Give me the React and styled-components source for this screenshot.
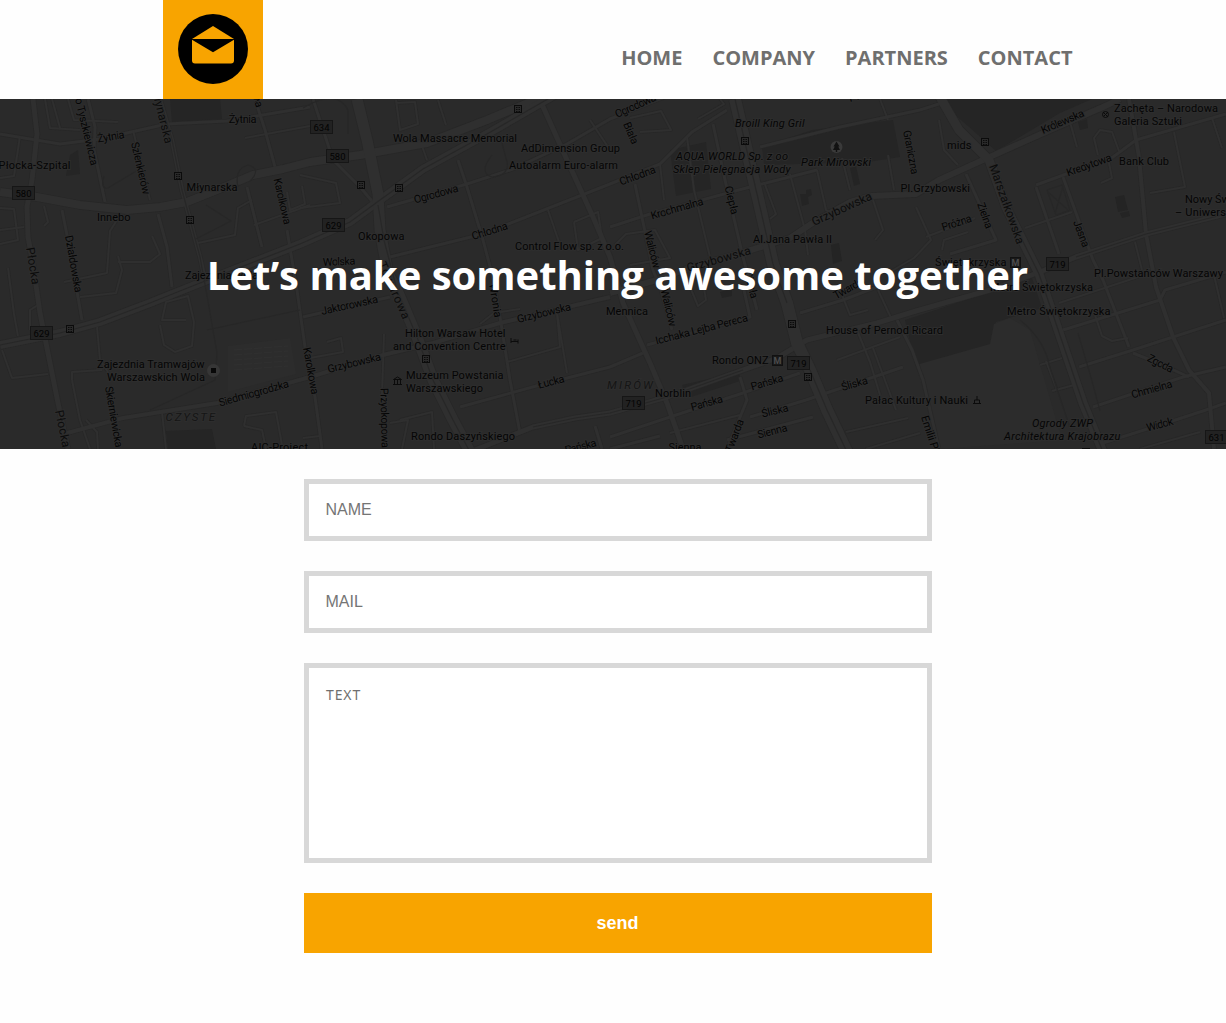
import React from "react";
import styled, { createGlobalStyle } from "styled-components";

const GlobalStyle = createGlobalStyle`
  *, *::before, *::after { box-sizing: border-box; }
  body {
    margin: 0;
    background: #fefefe;
    font-family: "Open Sans", sans-serif;
  }
`;

const Page = styled.div`
  min-height: 1023px;
  overflow: hidden;
`;

const Header = styled.header`
  display: flex;
  justify-content: space-between;
  align-items: flex-start;
  width: 909.5px;
  height: 99px;
  margin-left: 163px;
`;

const LogoLink = styled.a`
  display: flex;
  justify-content: center;
  width: 100px;
  height: 99px;
  padding-top: 14px;
  background: #f8a400;
`;

const Nav = styled.nav`
  display: flex;
  gap: 30px;
  padding-top: 44px;
`;

const NavLink = styled.a`
  color: #6f6f6e;
  font-size: 20px;
  font-weight: 700;
  line-height: 28px;
  text-decoration: none;
  white-space: nowrap;
`;

const Hero = styled.section`
  position: relative;
  display: flex;
  justify-content: center;
  align-items: center;
  height: 350px;
  padding: 2px 0 0 9px;
  overflow: hidden;
  background: #2a2a2a;
`;

const MapSvg = styled.svg`
  position: absolute;
  inset: 0;
  width: 1226px;
  height: 350px;
  font-family: Roboto, sans-serif;
`;

const HeroTitle = styled.h1`
  position: relative;
  margin: 0;
  color: #fff;
  font-size: 40px;
  font-weight: 700;
  line-height: 54px;
  white-space: nowrap;
`;

const Form = styled.form`
  display: flex;
  flex-direction: column;
  gap: 30px;
  width: 628px;
  margin: 30px 0 0 304px;
`;

const Field = styled.input`
  height: 62px;
  padding: 0 16.5px;
  border: 5px solid #d8d8d8;
  border-radius: 0;
  outline: 0;
  background: #fff;
  font: 16px "Liberation Sans", Arial, sans-serif;
  &::placeholder { color: #757575; opacity: 1; }
`;

const Message = styled.textarea`
  height: 200px;
  padding: 16px 17px;
  border: 5px solid #d8d8d8;
  border-radius: 0;
  outline: 0;
  resize: none;
  background: #fff;
  font: 14px/22px "Noto Sans", sans-serif;
  letter-spacing: 0.9px;
  &::placeholder { color: #6f6f6f; opacity: 1; }
`;

const SendButton = styled.button`
  height: 60px;
  padding: 0 1px 0 0;
  border: 0;
  background: #f8a400;
  color: #fff;
  font: bold 18px "Liberation Sans", Arial, sans-serif;
`;

const PARKS = [
  "170,99 220,99 222,119 172,122",
  "762,147 812,130 893,120 900,157 868,162 764,165",
  "670,150 706,142 711,189 676,196",
  "936,99 1092,99 1060,113 996,151 968,126",
  "905,320 990,292 1032,278 1042,308 996,322 990,346 916,367",
  "682,385 740,372 740,381 688,398",
  "70,155 78,150 80,174 66,176",
  "166,431 212,429 216,449 168,449",
];

const BUILDINGS = [
  "800,194 806,194 806,190 811,189 812,195 808,197 809,204 802,206",
  "1115,197 1124,195 1128,210 1118,212",
  "1120,213 1129,211 1130,216 1122,218",
  "831,245 839,243 842,261 833,264",
  "1078,122 1087,119 1088,128 1080,130",
  "850,168 856,166 860,184 854,186",
  "720,292 732,289 732,296 722,298",
];

/* [width, points] */
const ROADS = [
  [3, "0,134 60,144 100,139 167,124 227,121 310,107"],
  [3, "88,99 95,127 94,150 105,202"],
  [3, "62,210 68,240 82,320"],
  [2, "117,220 110,231 107,273 64,282"],
  [3, "158,214 167,247 172,287"],
  [2, "44,206 48,222 44,226"],
  [2, "0,208 14,209 18,240 0,244"],
  [2, "0,230 24,227"],
  [2, "8,268 14,314 18,336"],
  [2, "20,136 14,176 0,178"],
  [2, "45,99 50,128 80,130"],
  [2, "52,99 60,128"],
  [2, "68,99 74,120 118,122"],
  [2, "133,130 150,200"],
  [3, "247,187 262,247"],
  [2, "254,225 310,205"],
  [2, "198,243 235,235 238,208 252,200"],
  [2, "245,138 310,126"],
  [2, "287,192 290,210 305,204 302,186"],
  [2, "152,236 160,254 150,262 118,262"],
  [2, "97,327 100,360 108,372"],
  [2, "72,380 72,372 102,370"],
  [2, "72,380 80,420 90,449"],
  [2, "86,420 97,432 98,449"],
  [2, "160,325 164,345 175,352 192,346 194,322 188,296 166,302 162,320 186,320"],
  [2, "244,426 246,416 276,412 282,445"],
  [2, "244,426 262,430 266,449"],
  [2, "80,297 116,293 122,270 118,256"],
  [2, "30,330 30,310 38,305"],
  [2, "2,350 12,378 48,374"],
  [2, "162,412 166,449"],
  [2, "396,100 400,130 418,124 415,102 396,103"],
  [2, "438,100 446,125"],
  [2, "422,146 427,160"],
  [2, "300,208 340,203 336,183 300,175"],
  [3, "255,99 265,130 275,167"],
  [3, "287,230 297,290 305,347 315,397 322,449"],
  [3, "458,160 467,187 483,240 492,274 500,317 510,380 520,433"],
  [3, "387,207 467,184 513,169 567,144 610,119 690,87"],
  [3, "390,257 483,234 610,184 660,164 692,132 727,110"],
  [3, "303,317 390,297"],
  [2, "548,210 560,245"],
  [2, "574,222 578,250 602,238 598,212 574,222"],
  [2, "590,120 610,150"],
  [2, "640,132 671,130 661,111 630,118"],
  [2, "698,119 724,104 720,99"],
  [2, "880,99 888,120"],
  [3, "760,147 840,127 920,110 942,103"],
  [3, "610,227 650,214 750,187 817,170"],
  [3, "635,184 653,270 661,290 672,330"],
  [2, "660,164 664,200"],
  [2, "687,137 694,190 710,257"],
  [3, "713,124 725,180 743,257 757,310"],
  [2, "764,182 776,214 770,219"],
  [2, "790,174 805,230 808,255"],
  [2, "817,170 826,210 835,215"],
  [2, "842,158 850,190"],
  [2, "888,155 894,190"],
  [2, "615,245 626,234 655,230 670,258 630,265"],
  [2, "688,282 698,306 706,300 702,276"],
  [2, "873,200 883,230 875,240"],
  [2, "916,207 931,240 914,258 890,272"],
  [2, "926,237 975,218"],
  [2, "942,250 944,240 968,232"],
  [3, "966,174 996,240 950,254"],
  [3, "1036,185 1113,157 1136,140 1226,114"],
  [3, "1036,187 1059,254"],
  [3, "1063,177 1093,260 1103,280 1129,347"],
  [2, "1025,228 1072,212"],
  [2, "1098,155 1094,138 1100,130 1112,132 1119,151"],
  [2, "1108,158 1112,178 1101,183"],
  [2, "1150,193 1185,187 1174,132"],
  [2, "1070,122 1077,147"],
  [2, "939,120 944,150 958,165"],
  [2, "1212,118 1222,148"],
  [2, "1135,242 1142,270"],
  [3, "1079,367 1133,350 1173,337 1226,320"],
  [3, "1063,330 1160,300 1165,290 1226,272"],
  [3, "1133,353 1160,364 1189,377"],
  [3, "1093,407 1183,377 1226,367"],
  [3, "1103,443 1160,425 1206,410 1226,403"],
  [2, "1059,303 1138,277"],
  [2, "1095,315 1102,336 1112,341 1128,338"],
  [2, "1214,275 1224,318"],
  [2, "1040,365 1062,358"],
  [2, "1052,391 1074,385"],
  [2, "1046,361 1057,390"],
  [2, "1140,449 1200,432"],
  [3, "750,417 806,400 903,367"],
  [3, "610,437 670,417 743,393 800,373"],
  [2, "670,433 740,415"],
  [3, "727,440 813,417"],
  [2, "837,360 900,337"],
  [2, "857,330 870,362 880,395"],
  [2, "873,348 896,410"],
  [3, "897,320 912,350 923,380 939,449"],
  [3, "647,345 750,317 744,290"],
  [3, "800,313 843,300 877,287"],
  [2, "838,285 850,315 868,310"],
  [2, "878,290 892,320"],
  [3, "727,449 747,400 740,377"],
  [3, "460,407 540,385 610,367 643,353"],
  [2, "507,362 560,347 557,313 567,373"],
  [2, "480,324 494,313 520,309"],
  [2, "384,334 382,395"],
  [2, "327,342 341,338 343,352 310,358"],
  [2, "400,420 432,412 434,449"],
  [2, "390,423 408,420 402,449"],
  [2, "303,438 320,436"],
  [3, "595,426 602,449"],
  [2, "846,432 908,418"],
  [2, "866,449 920,433"],
  [3, "313,99 333,160 360,187 377,207"],
  [3, "610,449 660,436"],
  [5, "33,99 37,134 32,180 27,207 28,237 33,264 40,313 48,353 58,403 68,449"],
  [4, "160,99 172,140 182,190 200,257 205,280"],
  [4, "67,433 123,418 217,403 310,377 383,355 433,343 500,323 610,297"],
  [5, "540,100 567,160 593,217 610,257 623,303 650,363 667,403 683,449"],
  [6, "610,293 657,280 689,268 751,250 790,238 814,222 850,202 872,196 916,194 939,180 983,160 1050,130 1103,107 1120,99"],
  [4, "1129,99 1139,157 1146,234 1156,287 1173,337 1189,370 1209,393 1214,449"],
  [5, "470,452 533,427 575,418 610,413 667,397 743,370 777,358 807,340 877,323 916,311 990,290 1040,272 1076,257 1146,234 1226,214"],
  [8, "0,192 37,197 80,205 127,210 160,207 187,202 217,190 253,175 283,169 310,162 360,155 427,143 487,120 540,98"],
  [8, "0,345 60,333 100,322 150,303 200,283 300,244 350,222 380,200 423,169 487,134 560,92"],
  [11, "357,99 367,140 378,194 380,230 388,274 397,290 417,337 433,380 453,420 470,452"],
  [12, "735,99 750,164 760,207 773,264 787,303 797,343 810,370 827,410 847,452"],
  [9, "936,90 959,130 989,160 1006,207 1039,274 1049,303 1066,353 1083,403 1103,452"],
];

const MEDIANS = [
  "0,345 60,333 100,322 150,303 200,283 300,244 350,222 380,200 423,169 487,134 560,92",
  "378,205 384,240 397,290 417,337 433,380 453,420 470,452",
  "735,99 750,164 760,207 773,264 787,303",
  "810,370 827,410 847,452",
  "1006,207 1039,274 1049,303 1066,353 1083,403 1103,452",
  "160,99 172,140 182,190 200,257 206,290 217,353 215,380 150,410",
  "533,427 575,418 610,413 667,397 743,370",
  "1076,257 1146,234 1226,214",
  "207,330 300,310",
];

/* [text, baseline start x, y, baseline end x, y, variant] */
const LABELS = [
  ["o Tyszkiewicza", 75, 99, 91, 166],
  ["Żytnia", 98, 142.5, 125, 138],
  ["Żytnia", 228.7, 122.5, 256.5, 122.5],
  ["Szlenkierów", 131, 143, 143, 195],
  ["łynarska", 154, 99, 165, 144, "road"],
  ["wa", 253, 97, 256, 108],
  ["Płocka-Szpital", -1.5, 168.7, 70.5, 168.7],
  ["Innebo", 97, 220.7, 130.5, 220.7],
  ["Młynarska", 186.5, 190.7, 237.5, 190.7],
  ["Karolkowa", 273.5, 179, 284, 225],
  ["Płocka", 26, 248, 32, 285, "road"],
  ["Działdowska", 65, 236, 75, 293],
  ["Zajezdnia Wola", 185, 278.7, 258, 278.7],
  ["Wola Massacre Memorial", 393, 141.7, 517, 141.7],
  ["AdDimension Group", 521, 151.7, 620, 151.7],
  ["Autoalarm Euro-alarm", 509, 168.7, 618, 168.7],
  ["Ogrodowa", 415, 203.5, 459, 191.5],
  ["Okopowa", 358, 239.7, 404.5, 239.7],
  ["Chłodna", 473, 240, 508.5, 229],
  ["Control Flow sp. z o.o.", 515, 249.7, 624, 249.7],
  ["Wolska", 323, 266, 355.5, 264.5],
  ["Ogrodowa", 617, 118, 657, 100],
  ["Biała", 623, 124, 632, 145],
  ["Broill King Gril", 735, 127, 804.5, 127, "italic"],
  ["AQUA WORLD Sp. z oo", 676, 160, 788, 160, "italic"],
  ["Sklep Pielęgnacja Wody", 673, 172.7, 790.5, 172.7, "italic"],
  ["Park Mirowski", 801, 165.7, 871, 165.7, "italic"],
  ["Pw", 850, 102, 864, 98],
  ["Chłodna", 621, 185.5, 656.5, 172.5],
  ["Krochmalna", 652, 219.5, 704, 204.5],
  ["Ciepła", 724.5, 187, 731.5, 215],
  ["Waliców", 644, 232, 653.5, 269],
  ["Grzybowska", 814, 226, 873, 199, "road"],
  ["Al.Jana Pawła II", 753, 242.7, 832, 242.7],
  ["Grzybowska", 688, 272, 751.5, 254, "road"],
  ["Graniczna", 903, 131, 911.5, 175],
  ["Pl.Grzybowski", 900.5, 191.7, 970, 191.7],
  ["mids", 947, 148.7, 971.5, 148.7],
  ["Królewska", 1043, 134, 1085, 116],
  ["Zachęta – Narodowa", 1114, 111.7, 1218, 111.7],
  ["Galeria Sztuki", 1114, 124.7, 1182, 124.7],
  ["Bank Club", 1119, 164.7, 1169, 164.7],
  ["Kredytowa", 1068, 176.5, 1112.5, 160.5],
  ["Marszałkowska", 989, 166, 1017, 245, "road"],
  ["Zielna", 977, 204, 986, 229.5],
  ["Próżna", 943, 231, 972.5, 221.5],
  ["Jasna", 1073, 222, 1083, 248],
  ["Nowy Świat", 1185, 202.7, 1242, 202.7],
  ["– Uniwersytet", 1175, 215.7, 1245, 215.7],
  ["Świętokrzyska", 935, 265.7, 1006.5, 265.7],
  ["Pl.Powstańców Warszawy", 1094, 276.7, 1223, 276.7],
  ["Metro Świętokrzyska", 990, 290.7, 1093, 290.7],
  ["Metro Świętokrzyska", 1007, 314.7, 1110.5, 314.7],
  ["Zajezdnia Tramwajów", 97, 367.7, 204.5, 367.7],
  ["Warszawskich Wola", 107, 380.7, 205, 380.7],
  ["Skierniewicka", 105, 387, 115.5, 448],
  ["Siedmiogrodzka", 220, 406.5, 289.5, 387],
  ["CZYSTE", 165.5, 420.7, 215, 420.7, "district"],
  ["AIC-Project", 251, 450.7, 308, 450.7],
  ["Płocka", 55, 411, 62.5, 448, "road"],
  ["Karolkowa", 303, 348, 311.5, 395],
  ["Jaktorowska", 322, 315, 378.5, 302.5],
  ["Towarowa", 378, 264, 403, 320, "road"],
  ["Wronia", 489, 284, 494.5, 318],
  ["Grzybowska", 518, 323, 571.5, 310],
  ["Hilton Warsaw Hotel", 405, 336.7, 505.5, 336.7],
  ["and Convention Centre", 393, 349.7, 505.5, 349.7],
  ["Grzybowska", 328.5, 373, 381.5, 360],
  ["Muzeum Powstania", 406, 378.7, 503.5, 378.7],
  ["Warszawskiego", 406, 391.7, 483, 391.7],
  ["Łucka", 539, 388.7, 565, 382],
  ["Przyokopowa", 380.5, 388, 381.5, 448],
  ["Rondo Daszyńskiego", 411, 439.7, 515, 439.7],
  ["Pańska", 566, 454, 597, 446],
  ["Mennica", 606, 314.7, 648, 314.7],
  ["Waliców", 660.5, 290, 669.5, 327],
  ["Ciepła", 744, 272, 751, 299],
  ["Icchaka Lejba Pereca", 656.5, 344.5, 748.5, 321],
  ["Twarda", 836, 299.5, 864, 284],
  ["House of Pernod Ricard", 826, 333.7, 943, 333.7],
  ["Rondo ONZ", 712, 363.7, 768.5, 363.7],
  ["MIRÓW", 607, 388.7, 653, 388.7, "district"],
  ["Norblin", 655, 396.7, 691, 396.7],
  ["Pańska", 752, 390.5, 784, 381],
  ["Pańska", 692, 411, 723.5, 402],
  ["Śliska", 762.5, 417.5, 789, 411],
  ["Sienna", 758.5, 438.5, 788, 431],
  ["Śliska", 842.5, 391, 868.5, 383.5],
  ["Twarda", 732, 453, 744, 421],
  ["Sienna", 668.5, 451, 701.5, 451],
  ["Pałac Kultury i Nauki", 865, 403.7, 968, 403.7],
  ["Emilii Plater", 921, 417, 938, 470],
  ["Ogrody ZWP", 1032, 426.7, 1093, 426.7, "italic"],
  ["Architektura Krajobrazu", 1004, 439.7, 1120.5, 439.7, "italic"],
  ["Widok", 1147.5, 431.5, 1174, 424.5],
  ["Chmielna", 1132.5, 398.5, 1173, 387],
  ["Zgoda", 1146.5, 360.5, 1171, 373],
];

const SHIELDS = [
  ["580", 12, 186], ["634", 310, 120], ["580", 326, 149], ["629", 322, 218],
  ["719", 1046, 257], ["629", 30, 326], ["719", 787, 356], ["719", 622, 396],
  ["631", 1205, 430],
];

const STOPS = [
  [178, 176], [190, 220], [518, 109], [361, 185], [399, 188], [745, 141],
  [985, 142], [70, 329], [426, 359], [792, 324], [808, 377], [1086, 452],
];

const METROS = [[1010.5, 257.5], [772.5, 355.5]];

function MapLabel({ item: [text, x1, y1, x2, y2, variant] }) {
  const angle = (Math.atan2(y2 - y1, x2 - x1) * 180) / Math.PI;
  const length = Math.hypot(x2 - x1, y2 - y1);
  const district = variant === "district";
  const italic = district || variant === "italic";
  return (
    <text
      transform={`translate(${x1} ${y1}) rotate(${angle})`}
      textLength={length}
      fontSize={variant === "road" ? 12 : district ? 11.5 : 11}
      fontStyle={italic ? "italic" : "normal"}
      fill={district ? "#151515" : variant === "road" ? "#0c0c0c" : "#050505"}
      stroke="#2d2d2d"
      strokeWidth="2"
      paintOrder="stroke"
    >
      {text}
    </text>
  );
}

function CityMap() {
  return (
    <MapSvg viewBox="0 99 1226 350" aria-hidden="true">
      <g fill="#252525">
        {PARKS.map((p) => <polygon key={p} points={p} />)}
      </g>
      <polygon points="916,365 990,344 994,324 1010,318 1030,330 1062,440 940,449" fill="#2c2c2c" />
      <polygon points="228,346 290,338 296,374 228,392" fill="#2c2c2c" />
      <g stroke="#303030" strokeWidth="1">
        {[350, 355, 360, 365, 370].map((y) => (
          <path key={y} d={`M234 ${y}L288 ${y - 4}`} strokeDasharray="8 2" />
        ))}
      </g>
      <g fill="#242424">
        {BUILDINGS.map((p) => <polygon key={p} points={p} />)}
      </g>
      <g fill="none" stroke="#272727" strokeLinejoin="round">
        {ROADS.map(([w, p]) => <polyline key={p} points={p} strokeWidth={w + 1.4} />)}
      </g>
      <g fill="none" stroke="#2f2f2f" strokeLinejoin="round">
        {ROADS.map(([w, p]) => <polyline key={p} points={p} strokeWidth={w} />)}
      </g>
      <g fill="none" stroke="#272727" strokeWidth="1.2">
        {MEDIANS.map((p) => <polyline key={p} points={p} />)}
        <path d="M1047 190l15-5 8 25-14 5zM1048 192l20 18M1063 186l-8 28M196 239l35-18-25-16M238 187q-4-18 10-22 14 4 2 16M104 176q-4 14 4 12l30-18M492 155q-14 18 0 22 18-2 15-15l-6-23M303 108q34-20 45 2l0 24M1020 320q25 20 30 48l20 60M1078 333l14 48 8 30" />
      </g>
      <circle cx="836.5" cy="147" r="6" fill="#3a3a3a" />
      <path d="M836.5 141.500l3 5h-1.300l1.800 3.500h-2.800v2h-1.400v-2h-2.800l1.800-3.500h-1.300z" fill="#111" />
      <circle cx="213.500" cy="370.500" r="6.500" fill="#363636" />
      <path d="M211 368h5v5h-5z" fill="#080808" />
      {LABELS.map((item, i) => <MapLabel key={i} item={item} />)}
      {SHIELDS.map(([n, x, y]) => (
        <g key={`${x}-${y}`}>
          <rect x={x + 0.5} y={y + 0.5} width="22" height="13" fill="#222" stroke="#161616" />
          <text x={x + 11.5} y={y + 10.500} fontSize="9.500" textAnchor="middle" fill="#020202">{n}</text>
        </g>
      ))}
      {STOPS.map(([x, y]) => (
        <g key={`${x}-${y}`}>
          <rect x={x - 3.500} y={y - 3.500} width="7" height="7" fill="#2a2a2a" stroke="#0b0b0b" />
          <path d={`M${x - 2} ${y - 1.500}h4M${x - 2} ${y + 0.500}h4M${x - 2} ${y + 2.500}h4`} stroke="#0b0b0b" strokeDasharray="1 .5" />
        </g>
      ))}
      {METROS.map(([x, y]) => (
        <g key={x}>
          <rect x={x} y={y} width="10" height="10" fill="#191919" stroke="#111" />
          <text x={x + 5} y={y + 8.300} fontSize="9" fontWeight="700" textAnchor="middle" fill="#4c4c4c">M</text>
        </g>
      ))}
      <g fill="none" stroke="#0b0b0b">
        <path d="M511 338v5M511 341.500h7M518 339.500v4M513.500 340h3" />
        <path d="M393.500 379.500l4-2.500 4 2.500zM394.500 380v4M397.500 380v4M400.500 380v4M393 384.500h9" />
        <path d="M973 403.500h8M974.500 400h5v3M977 396v4M974.500 400v3" />
        <circle cx="1105.500" cy="114.500" r="3" />
        <path d="M1103 112l5 5M1108 112l-4 4" />
      </g>
    </MapSvg>
  );
}

function Logo() {
  return (
    <svg width="70" height="70" viewBox="0 0 70 70" aria-hidden="true">
      <circle cx="35" cy="35" r="35" fill="#000" />
      <path d="M35 12L56 25H14z" fill="#f8a400" />
      <path d="M14 25.800L35 38.300L56 25.800V46.500a3 3 0 0 1-3 3H17a3 3 0 0 1-3-3z" fill="#f8a400" />
    </svg>
  );
}

export default function App() {
  return (
    <Page>
      <GlobalStyle />
      <Header>
        <LogoLink><Logo /></LogoLink>
        <Nav>
          {["HOME", "COMPANY", "PARTNERS", "CONTACT"].map((name) => (
            <NavLink key={name}>{name}</NavLink>
          ))}
        </Nav>
      </Header>
      <Hero>
        <CityMap />
        <HeroTitle>Let’s make something awesome together</HeroTitle>
      </Hero>
      <Form>
        <Field type="text" placeholder="NAME" />
        <Field type="email" placeholder="MAIL" />
        <Message placeholder="TEXT" />
        <SendButton type="button">send</SendButton>
      </Form>
    </Page>
  );
}
